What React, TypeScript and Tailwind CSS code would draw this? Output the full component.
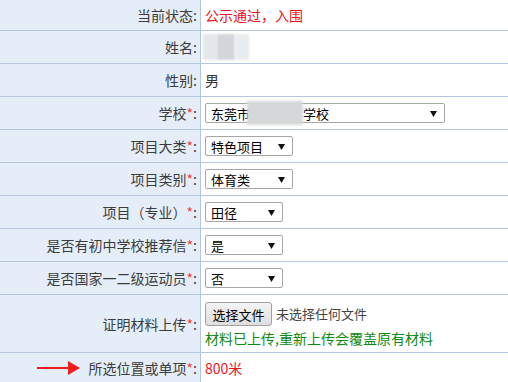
import React from 'react';

const Star = () => <span className="text-[#ff3b3b]">*</span>;

const Select: React.FC<{ width: string; children: React.ReactNode }> = ({ width, children }) => (
  <div
    className={`relative flex h-[20px] items-center rounded-[2px] border border-[#a6a6a6] bg-white pl-[5px] text-[13px] leading-none text-black ${width}`}
  >
    <span className="flex items-center whitespace-nowrap">{children}</span>
    <svg className="absolute right-[7px] top-[7px]" width="7" height="6" viewBox="0 0 7 6">
      <path d="M0 0 H7 L3.5 6 Z" fill="#111" />
    </svg>
  </div>
);

interface RowProps {
  label: React.ReactNode;
  children: React.ReactNode;
  h?: string;
  left?: React.ReactNode;
}

const Row: React.FC<RowProps> = ({ label, children, h = 'h-[33px]', left }) => (
  <div className={`flex border-b border-[#b4c6dc] ${h}`}>
    <div className="flex w-[201px] shrink-0 items-center justify-end border-r border-[#b4c6dc] bg-[#e5eef8] pr-[3px] text-[#3c3c3c]">
      {left}
      <span>{label}</span>
    </div>
    <div className="flex min-w-0 flex-1 flex-col justify-center bg-white pl-[4px]">{children}</div>
  </div>
);

const Arrow = () => (
  <svg className="mr-[9px]" width="43" height="16" viewBox="0 0 43 16">
    <path d="M0 8 H32" stroke="#ee1c1c" strokeWidth="2" />
    <path d="M31 1 L43 8 L31 15 Z" fill="#ee1c1c" />
  </svg>
);

export default function App() {
  return (
    <div className="h-[382px] w-[508px] overflow-hidden bg-white text-[14px] leading-[18px] [font-family:'Noto_Sans_CJK_SC','Microsoft_YaHei',sans-serif]">
      <Row label="当前状态:" h="h-[31px]">
        <span className="text-[#e8141e]">公示通过，入围</span>
      </Row>
      <Row label="姓名:">
        <div className="flex h-[26px] w-[46px] -ml-[2px]">
          <div className="h-full w-[14px] bg-[#e4e7ea] blur-[1px]" />
          <div className="h-full w-[18px] bg-[#d3d7db] blur-[1px]" />
          <div className="h-full w-[14px] bg-[#e9ecee] blur-[1px]" />
        </div>
      </Row>
      <Row label="性别:">
        <span className="text-[#333]">男</span>
      </Row>
      <Row label={<>学校<Star />:</>}>
        <Select width="w-[240px]">
          东莞市
          <span className="-ml-[3px] inline-block h-[24px] w-[56px] bg-[#d5d7d9] blur-[1.5px]" />
          学校
        </Select>
      </Row>
      <Row label={<>项目大类<Star />:</>}>
        <Select width="w-[88px]">特色项目</Select>
      </Row>
      <Row label={<>项目类别<Star />:</>}>
        <Select width="w-[88px]">体育类</Select>
      </Row>
      <Row label={<>项目（专业）<Star />:</>}>
        <Select width="w-[78px]">田径</Select>
      </Row>
      <Row label={<>是否有初中学校推荐信<Star />:</>}>
        <Select width="w-[78px]">是</Select>
      </Row>
      <Row label={<>是否国家一二级运动员<Star />:</>}>
        <Select width="w-[78px]">否</Select>
      </Row>
      <Row label={<>证明材料上传<Star />:</>} h="h-[58px]">
        <div className="mt-[2px] flex items-center">
          <button className="h-[24px] w-[67px] rounded-[3px] border border-[#a0a0a0] bg-gradient-to-b from-[#f4f4f4] to-[#dedede] text-[13px] leading-none text-black">
            选择文件
          </button>
          <span className="ml-[4px] text-[13px] text-[#444]">未选择任何文件</span>
        </div>
        <span className="mt-[3px] text-[#118a11]">材料已上传,重新上传会覆盖原有材料</span>
      </Row>
      <Row label={<>所选位置或单项<Star />:</>} h="h-[31px]" left={<Arrow />}>
        <span className="text-[#e8141e]">800米</span>
      </Row>
    </div>
  );
}
